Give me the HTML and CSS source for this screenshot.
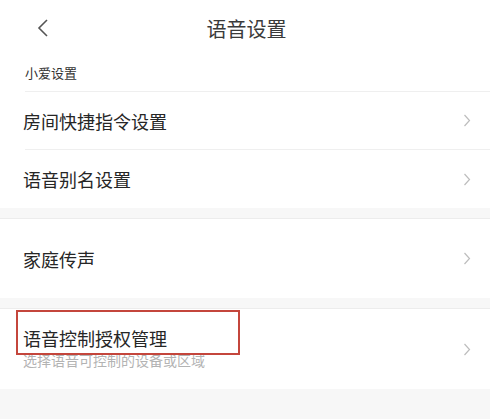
FILE: index.html
```html
<!DOCTYPE html>
<html lang="zh-CN">
<head>
<meta charset="utf-8">
<title>语音设置</title>
<link rel="stylesheet" href="styles.css">
</head>
<body>
<div class="page">
  <header class="header">
    <span class="back">
      <svg width="12" height="18" viewBox="0 0 12 18"><path d="M10 1 L2 9 L10 17" fill="none" stroke="#555" stroke-width="1.6"/></svg>
    </span>
    <h1 class="title">语音设置</h1>
  </header>

  <section class="group first">
    <div class="label">小爱设置</div>
    <div class="item">
      <span class="item-title">房间快捷指令设置</span>
      <svg class="chev" width="8" height="13" viewBox="0 0 8 13"><path d="M1.5 1 L6.5 6.5 L1.5 12" fill="none" stroke="#bdbdbd" stroke-width="1.2"/></svg>
    </div>
    <div class="item">
      <span class="item-title">语音别名设置</span>
      <svg class="chev" width="8" height="13" viewBox="0 0 8 13"><path d="M1.5 1 L6.5 6.5 L1.5 12" fill="none" stroke="#bdbdbd" stroke-width="1.2"/></svg>
    </div>
  </section>

  <section class="group">
    <div class="item tall">
      <span class="item-title">家庭传声</span>
      <svg class="chev" width="8" height="13" viewBox="0 0 8 13"><path d="M1.5 1 L6.5 6.5 L1.5 12" fill="none" stroke="#bdbdbd" stroke-width="1.2"/></svg>
    </div>
  </section>

  <section class="group">
    <div class="item double">
      <div class="texts">
        <span class="item-title">语音控制授权管理</span>
        <span class="item-sub">选择语音可控制的设备或区域</span>
      </div>
      <svg class="chev" width="8" height="13" viewBox="0 0 8 13"><path d="M1.5 1 L6.5 6.5 L1.5 12" fill="none" stroke="#bdbdbd" stroke-width="1.2"/></svg>
      <div class="highlight"></div>
    </div>
  </section>
</div>
</body>
</html>
```

FILE: styles.css
```css
* { box-sizing: border-box; margin: 0; padding: 0; }
html, body {
  width: 490px;
  height: 419px;
  overflow: hidden;
}
body {
  background: #f7f7f7;
  font-family: "Noto Sans CJK SC", "Noto Sans", sans-serif;
  color: #262626;
}
.page {
  display: flex;
  flex-direction: column;
}
.header {
  height: 57px;
  background: #fff;
  display: flex;
  align-items: center;
  justify-content: center;
  position: relative;
}
.back {
  position: absolute;
  left: 37px;
  top: 19px;
  width: 12px;
  height: 18px;
  display: flex;
}
.title {
  font-size: 20px;
  font-weight: 400;
  color: #3a3a3a;
  line-height: 24px;
  margin-left: 3px;
}
.group {
  background: #fff;
  border-top: 1px solid #ececec;
  margin-top: 10px;
}
.group.first {
  border-top: none;
  margin-top: 0;
}
.label {
  font-size: 13px;
  line-height: 20px;
  color: #333;
  padding: 6px 0 8px 25px;
}
.item {
  margin-left: 25px;
  padding-right: 19px;
  height: 58px;
  border-top: 1px solid #efefef;
  display: flex;
  align-items: center;
  justify-content: space-between;
  position: relative;
}
.group:not(.first) .item {
  border-top: none;
}
.item:last-child { height: 59px; }
.item.tall { height: 79px; }
.item.double {
  height: 80px;
}
.item-title {
  font-size: 18px;
  line-height: 22px;
  margin-left: -2px;
  color: #262626;
  display: block;
}
.texts {
  display: flex;
  flex-direction: column;
  gap: 2px;
  padding-bottom: 2px;
}
.item-sub {
  font-size: 14px;
  line-height: 18px;
  margin-left: -2px;
  color: #b3b3b3;
  display: block;
}
.chev { flex: none; }
.highlight {
  position: absolute;
  left: -9px;
  top: 1px;
  width: 224px;
  height: 45px;
  border: 2px solid #c4463c;
}
```
